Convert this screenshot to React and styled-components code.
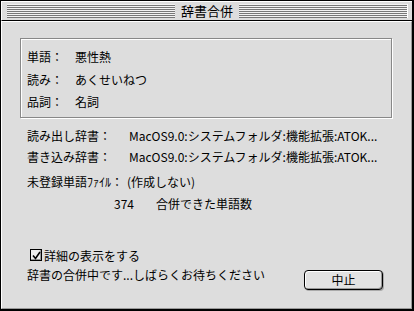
import React from 'react';
import styled, { createGlobalStyle } from 'styled-components';

const GlobalStyle = createGlobalStyle`
  html, body {
    margin: 0;
    padding: 0;
    background: #dddddd;
  }
  * {
    box-sizing: border-box;
  }
`;

const CheckIcon = () => (
    <svg width="9" height="9" viewBox="0 0 9 9">
        <path d="M1 4.5 L3.5 7.5 L8 1" fill="none" stroke="#000" strokeWidth="1.6"/>
    </svg>
);

const App = () => {
    return (
        <>
            <GlobalStyle/>
            <Window>
                <TitleBar>
                    <Stripes>
                        <Title>辞書合併</Title>
                    </Stripes>
                </TitleBar>
                <Content>
                    <GroupBox>
                        <InfoRow><InfoLabel>単語：</InfoLabel><span>悪性熱</span></InfoRow>
                        <InfoRow><InfoLabel>読み：</InfoLabel><span>あくせいねつ</span></InfoRow>
                        <InfoRow><InfoLabel>品詞：</InfoLabel><span>名詞</span></InfoRow>
                    </GroupBox>

                    <DetailRow $top={7}>
                        <DetailLabel>読み出し辞書：</DetailLabel>
                        <span>MacOS9.0:システムフォルダ:機能拡張:ATOK...</span>
                    </DetailRow>
                    <DetailRow $top={0}>
                        <DetailLabel>書き込み辞書：</DetailLabel>
                        <span>MacOS9.0:システムフォルダ:機能拡張:ATOK...</span>
                    </DetailRow>
                    <DetailRow $top={4}>
                        <DetailLabel $narrow>未登録単語ﾌｧｲﾙ：</DetailLabel>
                        <span>(作成しない)</span>
                    </DetailRow>
                    <CountRow>
                        <Count>374</Count>
                        <span>合併できた単語数</span>
                    </CountRow>

                    <CheckRow>
                        <CheckBox><CheckIcon/></CheckBox>
                        <span>詳細の表示をする</span>
                    </CheckRow>
                    <StatusRow>
                        <StatusText>辞書の合併中です...しばらくお待ちください</StatusText>
                        <Button>中止</Button>
                    </StatusRow>
                </Content>
            </Window>
        </>
    );
};

export default App;

// Styled Components

const Window = styled.div`
  width: 414px;
  height: 311px;
  display: flex;
  flex-direction: column;
  background: #dddddd;
  border: 1px solid #000;
  border-right-width: 2px;
  border-bottom-width: 2px;
  font-family: "Noto Sans CJK JP", "Liberation Sans", sans-serif;
  font-size: 12px;
  color: #000;
`;

const TitleBar = styled.div`
  height: 20px;
  padding: 2px 4px 2px 5px;
  border-bottom: 1px solid #000;
  background: #dddddd;
  border-top: 1px solid #fff;
  border-left: 1px solid #fff;
`;

const Stripes = styled.div`
  height: 14px;
  display: flex;
  justify-content: center;
  align-items: center;
  background: repeating-linear-gradient(to bottom, #f2f2f2 0 1px, #777 1px 2px);
  border-right: 1px solid #fff;
`;

const Title = styled.div`
  background: #dddddd;
  padding: 0 6px;
  height: 16px;
  line-height: 16px;
  font-size: 13px;
`;

const Content = styled.div`
  flex: 1;
  display: flex;
  flex-direction: column;
  padding: 16px 20px 0 18px;
  border-top: 1px solid #fff;
  border-left: 1px solid #fff;
  border-right: 1px solid #999;
  border-bottom: 1px solid #999;
`;

const GroupBox = styled.div`
  width: 372px;
  height: 80px;
  padding: 7px 0 0 6px;
  border: 1px solid #888;
  box-shadow: 1px 1px 0 #fff, inset 1px 1px 0 #fff;
`;

const InfoRow = styled.div`
  display: flex;
  height: 22.5px;
  line-height: 22.5px;
`;

const InfoLabel = styled.span`
  width: 48px;
`;

const DetailRow = styled.div`
  display: flex;
  height: 21px;
  line-height: 21px;
  padding-left: 7px;
  margin-top: ${({$top}) => $top}px;
  white-space: nowrap;
`;

const DetailLabel = styled.span`
  width: ${({$narrow}) => ($narrow ? '100px' : '102px')};
`;

const CountRow = styled.div`
  display: flex;
  height: 21px;
  line-height: 21px;
  margin-top: 1px;
  padding-left: 94px;
`;

const Count = styled.span`
  width: 42px;
`;

const CheckRow = styled.div`
  display: flex;
  align-items: center;
  gap: 2px;
  height: 18px;
  margin-top: 32px;
  padding-left: 10px;
`;

const CheckBox = styled.div`
  width: 12px;
  height: 12px;
  display: flex;
  align-items: center;
  justify-content: center;
  border: 1px solid #000;
  background: #eeeeee;
  box-shadow: inset -1px -1px 0 #999;
`;

const StatusRow = styled.div`
  display: flex;
  align-items: flex-start;
  justify-content: space-between;
  padding-left: 7px;
  padding-right: 8px;
`;

const StatusText = styled.span`
  line-height: 21px;
`;

const Button = styled.button`
  width: 79px;
  height: 20px;
  margin-top: 6px;
  padding: 0;
  border: 1px solid #000;
  border-radius: 4px;
  background: #e2e2e2;
  box-shadow: inset 1px 1px 0 #fff, inset -1px -1px 0 #999, 1px 1px 0 #aaa;
  font-family: inherit;
  font-size: 12px;
  color: #000;
  line-height: 18px;
`;
